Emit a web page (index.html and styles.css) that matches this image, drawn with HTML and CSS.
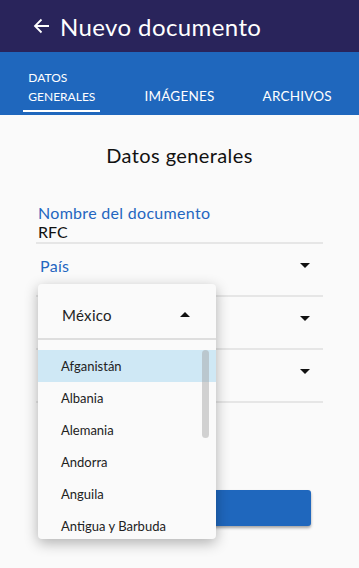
FILE: index.html
```html
<!DOCTYPE html>
<html lang="es">
<head>
    <meta charset="UTF-8">
    <meta name="viewport" content="width=device-width, initial-scale=1.0">
    <title>Nuevo documento</title>
    <link rel="stylesheet" href="styles.css">
</head>
<body>

    <header class="appbar">
        <svg class="back" width="17" height="16" viewBox="0 0 17 16">
            <path d="M16 8H2M8.5 1.5L2 8l6.5 6.5" fill="none" stroke="#fff" stroke-width="1.8"/>
        </svg>
        <h1>Nuevo documento</h1>
    </header>

    <nav class="tabs">
        <div class="tab active"><span>DATOS<br>GENERALES</span></div>
        <div class="tab"><span>IMÁGENES</span></div>
        <div class="tab"><span>ARCHIVOS</span></div>
    </nav>

    <main class="content">
        <h2>Datos generales</h2>

        <div class="form">
            <div class="field text-field">
                <label>Nombre del documento</label>
                <div class="value">RFC</div>
            </div>
            <div class="field select-field">
                <label>País</label>
                <span class="caret"></span>
            </div>
            <div class="field select-field">
                <label></label>
                <span class="caret"></span>
            </div>
            <div class="field select-field">
                <label></label>
                <span class="caret"></span>
            </div>

            <button class="save-btn">GUARDAR</button>

            <div class="dropdown">
                <div class="dropdown-head">
                    <span>México</span>
                    <span class="caret up"></span>
                </div>
                <ul class="options">
                    <li class="selected">Afganistán</li>
                    <li>Albania</li>
                    <li>Alemania</li>
                    <li>Andorra</li>
                    <li>Anguila</li>
                    <li>Antigua y Barbuda</li>
                </ul>
                <div class="scrollbar"></div>
            </div>
        </div>
    </main>

</body>
</html>
```

FILE: styles.css
```css
body {
    font-family: Lato, "Noto Sans", sans-serif;
    background-color: #fafafa;
    margin: 0;
    padding: 0;
    min-height: 100vh;
    color: #111;
}

.appbar {
    background: #29245b;
    height: 52px;
    display: flex;
    align-items: center;
    padding-left: 33px;
    box-sizing: border-box;
}

.appbar .back {
    margin-right: 10px;
}

.appbar h1 {
    margin: 0;
    color: #fff;
    font-size: 24px;
    font-weight: 400;
    letter-spacing: 0.4px;
}

.tabs {
    background: #1f67bd;
    height: 63px;
    display: grid;
    grid-template-columns: 1fr 1fr 1fr;
    padding: 0 3px;
}

.tab {
    display: flex;
    align-items: flex-end;
    justify-content: center;
    color: #fff;
    font-size: 13.5px;
    letter-spacing: 0.2px;
    padding-bottom: 10px;
}

.tab span {
    line-height: 18px;
}

.tab.active span {
    font-size: 12px;
    letter-spacing: 0;
    line-height: 19px;
    padding: 0 5px 4px;
    border-bottom: 2px solid #fff;
    margin-bottom: -7px;
}

.content {
    padding: 28px 36px 50px;
}

.content h2 {
    margin: 0;
    text-align: center;
    font-size: 20px;
    font-weight: 400;
    letter-spacing: 0.4px;
}

.form {
    position: relative;
    margin-top: 37px;
}

.field {
    border-bottom: 2px solid #e6e6e6;
    position: relative;
}

.field label {
    display: block;
    color: #2466c0;
    font-size: 16px;
    letter-spacing: 0.3px;
    padding-left: 2px;
}

.text-field label {
    line-height: 18px;
}

.text-field .value {
    font-size: 16px;
    line-height: 20px;
    padding-left: 2px;
}

.select-field {
    height: 51px;
}

.select-field label {
    padding-left: 4px;
    padding-top: 12px;
    line-height: 20px;
}

.caret {
    position: absolute;
    right: 13px;
    top: 19px;
    width: 0;
    height: 0;
    border-left: 5px solid transparent;
    border-right: 5px solid transparent;
    border-top: 5px solid #111;
}

.caret.up {
    border-top: none;
    border-bottom: 5px solid #111;
    right: 26px;
    top: 28px;
}

.save-btn {
    display: block;
    width: 264px;
    height: 36px;
    margin: 87px 0 0 11px;
    background: #1f67bd;
    color: #fff;
    border: none;
    border-radius: 3px;
    font-family: inherit;
    font-size: 14px;
    box-shadow: 0 2px 3px rgba(0, 0, 0, 0.35);
}

.dropdown {
    position: absolute;
    left: 2px;
    top: 80px;
    width: 178px;
    background: #fafafa;
    border-radius: 4px;
    box-shadow: 0 4px 14px rgba(0, 0, 0, 0.3);
}

.dropdown-head {
    border-bottom: 2px solid #dedede;
    display: flex;
    align-items: center;
    padding-left: 24px;
    padding-top: 8px;
    box-sizing: border-box;
    height: 56px;
    font-size: 15px;
    letter-spacing: 0.3px;
    position: relative;
    color: #222;
}

.options {
    list-style: none;
    margin: 0;
    padding: 10px 0 0;
    height: 189px;
    overflow: hidden;
}

.options li {
    height: 32px;
    line-height: 32px;
    padding-left: 23px;
    font-size: 13px;
    color: #222;
}

.options li.selected {
    background: #cfe8f5;
}

.scrollbar {
    position: absolute;
    left: 164px;
    top: 66px;
    width: 7px;
    height: 88px;
    border-radius: 4px;
    background: rgba(160, 160, 160, 0.45);
}
```
